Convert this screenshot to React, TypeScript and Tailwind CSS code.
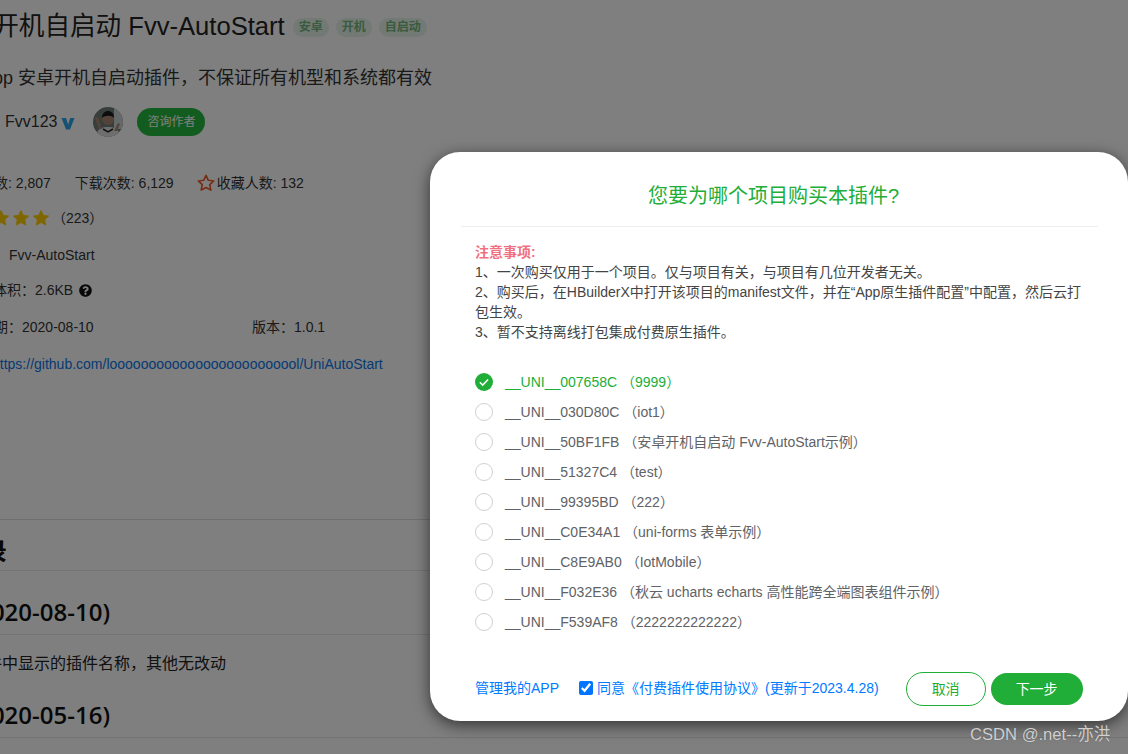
import { FaQuestionCircle } from "react-icons/fa";

const GREEN = "#21ae38";
const projects = [
  ["__UNI__007658C", "（9999）"],
  ["__UNI__030D80C", "（iot1）"],
  ["__UNI__50BF1FB", "（安卓开机自启动 Fvv-AutoStart示例）"],
  ["__UNI__51327C4", "（test）"],
  ["__UNI__99395BD", "（222）"],
  ["__UNI__C0E34A1", "（uni-forms 表单示例）"],
  ["__UNI__C8E9AB0", "（IotMobile）"],
  ["__UNI__F032E36", "（秋云 ucharts echarts 高性能跨全端图表组件示例）"],
  ["__UNI__F539AF8", "（2222222222222）"],
];

function Star({ size = 18, filled = true }: { size?: number; filled?: boolean }) {
  return (
    <svg width={size} height={size} viewBox="0 0 24 24" className="shrink-0">
      <path
        d="M12 1.8l3.1 6.6 7.2.9-5.3 5 1.4 7.2L12 18l-6.4 3.5L7 14.3l-5.3-5 7.2-.9z"
        fill={filled ? "#ffcc00" : "none"}
        stroke={filled ? "#ffcc00" : "#ee5a24"}
        strokeWidth={filled ? 1 : 2.2}
        strokeLinejoin="round"
      />
    </svg>
  );
}

function Tag({ children }: { children: string }) {
  return (
    <span className="h-[19px] px-[6px] rounded-full bg-[#e6f2ea] text-[#72b87e] text-[12px] font-bold leading-[19px]">
      {children}
    </span>
  );
}

function Background() {
  return (
    <div className="flex flex-col text-[#333] text-[14px] whitespace-nowrap">
      <div className="h-[52px] flex items-center gap-[8px]">
        <h1 className="text-[25.6px] -ml-[58px] text-[#222] font-normal">安卓开机自启动 Fvv-AutoStart</h1>
        <div className="flex gap-[7px] mt-[3px]">
          <Tag>安卓</Tag>
          <Tag>开机</Tag>
          <Tag>自启动</Tag>
        </div>
      </div>
      <div className="h-[36px] mt-[8px] flex items-center text-[18px] -ml-[47px]">uni-app 安卓开机自启动插件，不保证所有机型和系统都有效</div>
      <div className="h-[28px] mt-[12px] flex items-center text-[16px]">
        <span className="ml-[5px]">Fvv123</span>
        <svg width="14" height="13" viewBox="0 0 14 13" className="ml-[4px] mt-[2px]">
          <path d="M0.5 1H5L7.2 7.5 9.2 1H13.5L9 12.5H5z" fill="#2aa5e6" />
        </svg>
        <svg width="30" height="30" viewBox="0 0 30 30" className="ml-[18px] rounded-full">
          <rect width="30" height="30" fill="#6f7c78" />
          <rect x="21" width="9" height="22" fill="#c9d3d2" />
          <path d="M3 30c1-8 5-10 12-10s11 2 12 10z" fill="#dcdcdc" />
          <path d="M10 22l5 3 5-3" fill="none" stroke="#222" strokeWidth="1.5" />
          <circle cx="15" cy="12" r="6" fill="#a88672" />
          <path d="M9 11c0-5 3-7 6-7s6 2 6 7c-2-3-9-3-12 0z" fill="#1a1a1a" />
          <path d="M2 11l4 11h3L5 10z" fill="#a88672" />
          <path d="M27 17l-3 7h-3l4-8z" fill="#a88672" />
        </svg>
        <span className="ml-[14px] h-[28px] w-[68px] rounded-full text-center leading-[28px] text-[12px] text-white bg-[#24b83e]">咨询作者</span>
      </div>
      <div className="h-[20px] mt-[37px] flex items-center">
        <span className="-ml-[6px]">数: 2,807</span>
        <span className="ml-[24px]">下载次数: 6,129</span>
        <span className="ml-[23px] mr-[2px]"><Star filled={false} /></span>
        <span>收藏人数: 132</span>
      </div>
      <div className="h-[20px] mt-[15px] flex items-center gap-[2px] -ml-[8px]">
        <Star /><Star /><Star />
        <span>（223）</span>
      </div>
      <div className="h-[20px] mt-[17px] flex items-center pl-[9px]">Fvv-AutoStart</div>
      <div className="h-[20px] mt-[15px] flex items-center -ml-[7px]">
        体积：2.6KB
        <FaQuestionCircle className="ml-[6px] text-[#111] text-[13px]" />
      </div>
      <div className="h-[20px] mt-[17px] flex items-center -ml-[6px]">
        <span className="w-[258px]">期：2020-08-10</span>
        <span>版本：1.0.1</span>
      </div>
      <div className="h-[20px] mt-[17px] flex items-center -ml-[8px] text-[#0b76e8]">https://github.com/looooooooooooooooooooooool/UniAutoStart</div>
      <div className="mt-[145px] border-t border-[#dedede] h-[52px] pt-[10px] flex items-center text-[24px] font-bold -mb-[1px] text-[#111] [font-family:'Open_Sans','Noto_Sans_CJK_SC',sans-serif]">
        <span className="-ml-[89px]">更新记录</span>
      </div>
      <div className="border-t border-[#e6e6e6] h-[64px] pt-[18px] flex items-center text-[24px] font-semibold text-[#111] [font-family:'Open_Sans','Noto_Sans_CJK_SC',sans-serif]">
        <span className="-ml-[91px]">1.0.1 (2020-08-10)</span>
      </div>
      <div className="border-t border-[#e6e6e6] h-[58px] pb-[3px] flex items-center text-[16px] text-[#222] [font-family:'Noto_Sans_CJK_SC',sans-serif]">
        <span className="-ml-[14px]">件中显示的插件名称，其他无改动</span>
      </div>
      <div className="h-[45px] flex items-center text-[24px] font-semibold text-[#111] [font-family:'Open_Sans','Noto_Sans_CJK_SC',sans-serif]">
        <span className="-ml-[91px]">1.0.0 (2020-05-16)</span>
      </div>
      <div className="border-t border-[#e6e6e6] w-full" />
    </div>
  );
}

function Radio({ on }: { on: boolean }) {
  if (on)
    return (
      <svg width="18" height="18" viewBox="0 0 18 18" className="shrink-0">
        <circle cx="9" cy="9" r="9" fill={GREEN} />
        <path d="M4.8 9.3l2.9 2.8 5.4-5.6" fill="none" stroke="#fff" strokeWidth="1.5" />
      </svg>
    );
  return <span className="w-[18px] h-[18px] rounded-full border border-[#d1d1d6] shrink-0" />;
}

function Modal() {
  return (
    <div className="absolute left-[430px] top-[152px] w-[698px] h-[569px] bg-white rounded-[30px] shadow-[0_4px_16px_rgba(0,0,0,0.6)] flex flex-col text-[14px] text-[#555]">
      <div className="ml-[31px] mr-[30px] h-[75px] border-b border-[#eeeeee] flex items-center justify-center text-[20px] text-[#21ae38] pt-[13px] pr-[12px]">
        您要为哪个项目购买本插件?
      </div>
      <div className="mx-[45px] mt-[15px] leading-[20px] text-[14px] text-[#444]">
        <div className="text-[#f0707f] font-bold">注意事项:</div>
        <div>1、一次购买仅用于一个项目。仅与项目有关，与项目有几位开发者无关。</div>
        <div>2、购买后，在HBuilderX中打开该项目的manifest文件，并在“App原生插件配置”中配置，然后云打包生效。</div>
        <div>3、暂不支持离线打包集成付费原生插件。</div>
      </div>
      <div className="mx-[45px] mt-[25px] flex flex-col">
        {projects.map(([id, name], i) => (
          <div key={id} className={`h-[30px] flex items-center gap-[12px] text-[14px] ${i === 0 ? "text-[#21ae38]" : "text-[#606266]"}`}>
            <Radio on={i === 0} />
            <span>{id} {name}</span>
          </div>
        ))}
      </div>
      <div className="mx-[45px] mt-[34px] h-[34px] flex items-center text-[14px] text-[#007aff]">
        <span>管理我的APP</span>
        <input type="checkbox" defaultChecked className="ml-[20px] w-[14px] h-[14px] accent-[#0075ff]" />
        <span className="ml-[4px]">同意《付费插件使用协议》(更新于2023.4.28)</span>
        <button className="ml-[27px] mt-[2px] w-[80px] h-[34px] rounded-full border border-[#21ae38] text-[#21ae38] bg-white text-[14px]">取消</button>
        <button className="ml-[5px] mt-[2px] w-[92px] h-[32px] rounded-full bg-[#21ae38] text-white text-[14px]">下一步</button>
      </div>
    </div>
  );
}

export default function App() {
  return (
    <div className="relative w-[1128px] h-[754px] overflow-hidden bg-white [font-family:'Liberation_Sans','Noto_Sans_CJK_SC',sans-serif]">
      <Background />
      <div className="absolute inset-0 bg-black/50" />
      <Modal />
      <div className="absolute left-[970px] top-[724px] text-[16.6px] leading-[22px] text-[#d0d0d0] [text-shadow:0_0_1px_#555] whitespace-nowrap">CSDN @.net--亦洪</div>
    </div>
  );
}
